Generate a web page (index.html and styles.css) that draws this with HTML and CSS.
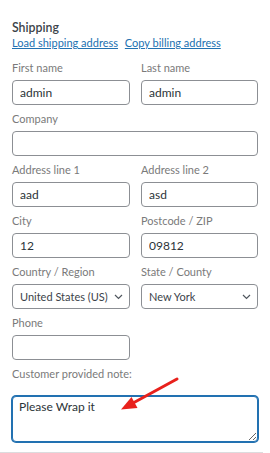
FILE: index.html
```html
<!DOCTYPE html>
<html lang="en">
<head>
    <meta charset="UTF-8">
    <meta name="viewport" content="width=device-width, initial-scale=1.0">
    <title>Shipping address</title>
    <link rel="stylesheet" href="styles.css">
</head>
<body>
    <div class="edit-address">
        <h3>Shipping</h3>
        <p class="load-links">
            <a href="#">Load shipping address</a>
            <a href="#">Copy billing address</a>
        </p>

        <div class="fields">
            <div class="field">
                <label for="first-name">First name</label>
                <input id="first-name" type="text" value="admin">
            </div>
            <div class="field">
                <label for="last-name">Last name</label>
                <input id="last-name" type="text" value="admin">
            </div>
            <div class="field wide">
                <label for="company">Company</label>
                <input id="company" type="text" value="">
            </div>
            <div class="field">
                <label for="address-1">Address line 1</label>
                <input id="address-1" type="text" value="aad">
            </div>
            <div class="field">
                <label for="address-2">Address line 2</label>
                <input id="address-2" type="text" value="asd">
            </div>
            <div class="field">
                <label for="city">City</label>
                <input id="city" type="text" value="12">
            </div>
            <div class="field">
                <label for="postcode">Postcode / ZIP</label>
                <input id="postcode" type="text" value="09812">
            </div>
            <div class="field">
                <label for="country">Country / Region</label>
                <div class="select-wrap">
                    <select id="country">
                        <option>United States (US)</option>
                    </select>
                    <svg class="chevron" width="9" height="6" viewBox="0 0 9 6"><path d="M1 1l3.5 3.5L8 1" fill="none" stroke="#50575e" stroke-width="1.2"/></svg>
                </div>
            </div>
            <div class="field">
                <label for="state">State / County</label>
                <div class="select-wrap">
                    <select id="state">
                        <option>New York</option>
                    </select>
                    <svg class="chevron" width="9" height="6" viewBox="0 0 9 6"><path d="M1 1l3.5 3.5L8 1" fill="none" stroke="#50575e" stroke-width="1.2"/></svg>
                </div>
            </div>
            <div class="field">
                <label for="phone">Phone</label>
                <input id="phone" type="text" value="">
            </div>
            <div class="field wide note">
                <label for="note">Customer provided note:</label>
                <textarea id="note">Please Wrap it</textarea>
            </div>
        </div>

        <!-- annotation arrow drawn over the note box -->
        <svg class="arrow" width="263" height="453" viewBox="0 0 263 453">
            <line x1="177" y1="379" x2="134" y2="402.5" stroke="#e8211c" stroke-width="3" stroke-linecap="round"/>
            <polygon points="121,409.5 137.5,408 131.5,397" fill="#e8211c"/>
        </svg>
    </div>
</body>
</html>
```

FILE: styles.css
```css
/* General Styles */
body {
    margin: 0;
    background: #ffffff;
    font-family: Lato, "Noto Sans", sans-serif;
    color: #2c3338;
}

.edit-address {
    position: relative;
    width: 263px;
    box-sizing: border-box;
    padding: 20px 0 10px 12px;
    border-bottom: 1px solid #dcdcde;
}

h3 {
    margin: 0;
    font-size: 12.3px;
    line-height: 16px;
    font-weight: 600;
    color: #3c434a;
}

.load-links {
    margin: 0 0 10px;
    font-size: 11px;
    line-height: 14px;
}

.load-links a {
    color: #2271b1;
    text-decoration: underline;
    margin-right: 4px;
}

/* Form grid */
.fields {
    display: grid;
    grid-template-columns: 118px 117px;
    column-gap: 11px;
    row-gap: 6px;
}

.field.wide {
    grid-column: 1 / -1;
}

.field label {
    display: block;
    font-size: 11px;
    line-height: 16px;
    margin-bottom: 4px;
    color: #7a7a7a;
}

.field input,
.field select {
    display: block;
    width: 100%;
    height: 25px;
    box-sizing: border-box;
    margin: 0;
    border: 1px solid #8c8f94;
    border-radius: 4px;
    background: #fff;
    font-family: Lato, "Noto Sans", sans-serif;
    font-size: 12px;
    color: #2c3338;
    padding: 0 7px;
    outline: none;
}

.select-wrap {
    position: relative;
}

.field select {
    appearance: none;
    -webkit-appearance: none;
    padding: 0 16px 0 7px;
    font-size: 11px;
    color: #3c434a;
}

.chevron {
    position: absolute;
    right: 7px;
    top: 10px;
    pointer-events: none;
}

/* Customer note */
.note label {
    margin-bottom: 14px;
}

.note textarea {
    display: block;
    width: 100%;
    height: 46px;
    box-sizing: border-box;
    margin: 0;
    padding: 2px 6px;
    border: 1px solid #2271b1;
    border-radius: 4px;
    box-shadow: 0 0 0 1px #2271b1;
    font-family: Lato, "Noto Sans", sans-serif;
    font-size: 12px;
    line-height: 16px;
    color: #2c3338;
    outline: none;
    resize: both;
}

.arrow {
    position: absolute;
    left: 0;
    top: 0;
    pointer-events: none;
}
```
